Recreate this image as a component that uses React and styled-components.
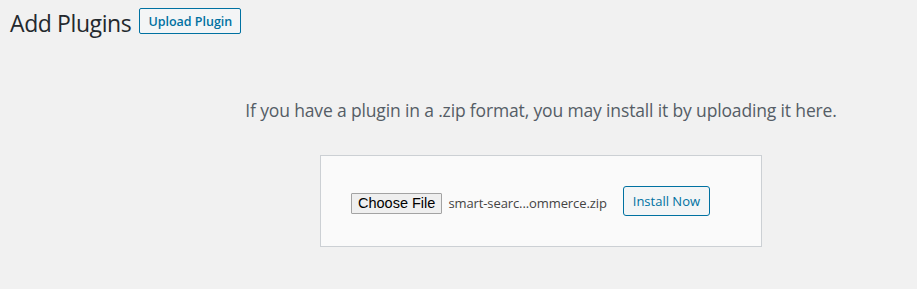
import React from "react";
import styled, { createGlobalStyle } from "styled-components";

const Global = createGlobalStyle`
  html, body { margin: 0; padding: 0; background: #f1f1f1; }
  body { font-family: "Open Sans", "Noto Sans", sans-serif; color: #23282d; overflow: hidden; }
`;

const Wrap = styled.div`
  width: 917px;
  height: 289px;
  box-sizing: border-box;
`;

const Header = styled.div`
  display: flex;
  align-items: flex-start;
  padding: 0 0 0 10px;
  height: 40px;
`;

const Title = styled.h1`
  margin: 0;
  padding: 9px 0 4px;
  font-size: 23px;
  font-weight: 400;
  line-height: 29px;
  color: #23282d;
  letter-spacing: -0.4px;
`;

const Button = styled.button`
  box-sizing: border-box;
  font-family: "Open Sans", "Noto Sans", sans-serif;
  font-size: ${p => p.$size || 13}px;
  font-weight: ${p => p.$weight || 400};
  color: #0071a1;
  background: #f3f5f6;
  border: 1px solid #0071a1;
  border-radius: ${p => p.$radius || 3}px;
  height: ${p => p.$h}px;
  padding: 0 ${p => p.$px}px;
  margin: 0;
  cursor: pointer;
  white-space: nowrap;
`;

const UploadButton = styled(Button)`
  margin: 8px 0 0 8px;
`;

const UploadArea = styled.div`
  display: flex;
  flex-direction: column;
  align-items: center;
  padding-left: 165px;
`;

const Help = styled.p`
  margin: 58px 0 0;
  font-size: 17.5px;
  line-height: 24px;
  color: #555d66;
  letter-spacing: -0.15px;
`;

const Form = styled.div`
  box-sizing: border-box;
  margin-top: 33px;
  width: 442px;
  height: 92px;
  background: #fafafa;
  border: 1px solid #ccd0d4;
  padding: 30px;
  display: flex;
  align-items: center;
`;

const FilePicker = styled.div`
  display: flex;
  align-items: center;
  gap: 6px;
  margin-top: 4px;
`;

const ChooseButton = styled.span`
  box-sizing: border-box;
  display: inline-flex;
  align-items: center;
  height: 21px;
  padding: 0 6px;
  font-family: "Liberation Sans", Arial, sans-serif;
  font-size: 14.5px;
  color: #000;
  background: #efefef;
  border: 1px solid #a3a3a3;
  border-radius: 1px;
`;

const FileName = styled.span`
  font-size: 13px;
  color: #444;
  letter-spacing: -0.1px;
`;

const InstallButton = styled(Button)`
  margin-left: 16px;
`;

export default function App() {
  return (
    <Wrap>
      <Global />
      <Header>
        <Title>Add Plugins</Title>
        <UploadButton $h={26} $px={8} $weight={600} $size={12.5} $radius={2}>
          Upload Plugin
        </UploadButton>
      </Header>
      <UploadArea>
        <Help>If you have a plugin in a .zip format, you may install it by uploading it here.</Help>
        <Form>
          <FilePicker>
            <ChooseButton>Choose File</ChooseButton>
            <FileName>smart-searc...ommerce.zip</FileName>
          </FilePicker>
          <InstallButton $h={30} $px={9}>Install Now</InstallButton>
        </Form>
      </UploadArea>
    </Wrap>
  );
}
